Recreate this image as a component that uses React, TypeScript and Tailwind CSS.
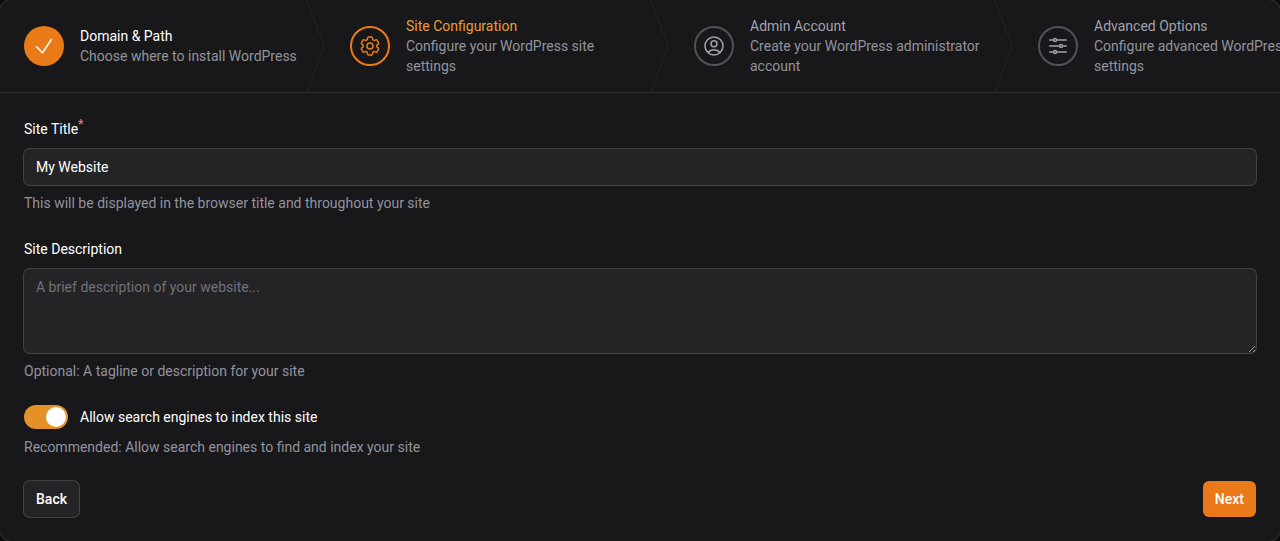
import React, { useState } from 'react';
import clsx from 'clsx';
import {
  HiOutlineAdjustmentsHorizontal,
  HiOutlineCheck,
  HiOutlineCog6Tooth,
  HiOutlineUserCircle,
} from 'react-icons/hi2';
import type { IconType } from 'react-icons';

// ============================================================
// Steps
// ============================================================

type StepStatus = 'done' | 'current' | 'upcoming';

interface Step {
  label: string;
  description: string;
  icon: IconType;
  status: StepStatus;
}

const STEPS: Step[] = [
  {
    label: 'Domain & Path',
    description: 'Choose where to install WordPress',
    icon: HiOutlineCheck,
    status: 'done',
  },
  {
    label: 'Site Configuration',
    description: 'Configure your WordPress site settings',
    icon: HiOutlineCog6Tooth,
    status: 'current',
  },
  {
    label: 'Admin Account',
    description: 'Create your WordPress administrator account',
    icon: HiOutlineUserCircle,
    status: 'upcoming',
  },
  {
    label: 'Advanced Options',
    description: 'Configure advanced WordPress settings',
    icon: HiOutlineAdjustmentsHorizontal,
    status: 'upcoming',
  },
];

const circleStyles: Record<StepStatus, string> = {
  done: 'bg-[#ea7a17] text-white',
  current: 'border-2 border-[#ea7a17] text-[#ea7a17]',
  upcoming: 'border-2 border-[#52525b] text-[#a1a1aa]',
};

const labelStyles: Record<StepStatus, string> = {
  done: 'text-white',
  current: 'text-[#e99c36]',
  upcoming: 'text-[#a1a1aa]',
};

const StepItem: React.FC<{ step: Step; isLast: boolean }> = ({ step, isLast }) => {
  const Icon = step.icon;

  return (
    <li className="relative flex" aria-current={step.status === 'current' ? 'step' : undefined}>
      <button type="button" className="flex h-full items-center gap-4 px-6 py-4 text-left">
        <span
          className={clsx(
            'flex size-10 shrink-0 items-center justify-center rounded-full',
            circleStyles[step.status]
          )}
        >
          <Icon className="size-6" />
        </span>
        <span className="block max-w-[236px]">
          <span className={clsx('block', labelStyles[step.status])}>{step.label}</span>
          <span className="block text-[#93939c]">{step.description}</span>
        </span>
      </button>

      {/* Chevron separator */}
      {!isLast && (
        <svg
          className="absolute inset-y-0 right-0 h-full w-5 text-white/5"
          fill="none"
          preserveAspectRatio="none"
          viewBox="0 0 22 80"
          aria-hidden="true"
        >
          <path
            d="M0 -2L20 40L0 82"
            stroke="currentColor"
            strokeLinejoin="round"
            vectorEffect="non-scaling-stroke"
          />
        </svg>
      )}
    </li>
  );
};

// ============================================================
// Form fields
// ============================================================

interface FieldProps {
  id: string;
  label: string;
  hint: string;
  required?: boolean;
  children: React.ReactNode;
}

const Field: React.FC<FieldProps> = ({ id, label, hint, required, children }) => (
  <div className="flex flex-col gap-2">
    <label htmlFor={id} className="leading-6 text-white">
      {label}
      {required && <sup className="text-xs font-medium text-[#f87171]">*</sup>}
    </label>
    {children}
    <p className="text-[#93939c]">{hint}</p>
  </div>
);

const controlStyles =
  'block w-full rounded-md bg-[#242426] px-3 text-white ring-1 ring-[#434345] outline-none placeholder:text-[#71717a]';

// ============================================================
// Page
// ============================================================

export default function App() {
  const [title, setTitle] = useState('My Website');
  const [description, setDescription] = useState('');
  const [indexed, setIndexed] = useState(true);

  return (
    <div className="bg-[#0c0c0e] font-[Roboto,'Open_Sans',sans-serif] text-sm">
      <div className="overflow-hidden rounded-xl bg-[#18181b] ring-1 ring-[#2f2f32]">
        <ol className="grid grid-cols-[326px_repeat(3,344px)] border-b border-[#2f2f32]">
          {STEPS.map((step, index) => (
            <StepItem key={step.label} step={step} isLast={index === STEPS.length - 1} />
          ))}
        </ol>

        <form className="flex flex-col gap-6 p-6" onSubmit={(e) => e.preventDefault()}>
          <Field
            id="site-title"
            label="Site Title"
            hint="This will be displayed in the browser title and throughout your site"
            required
          >
            <input
              id="site-title"
              type="text"
              required
              value={title}
              onChange={(e) => setTitle(e.target.value)}
              className={clsx(controlStyles, 'h-9')}
            />
          </Field>

          <Field
            id="site-description"
            label="Site Description"
            hint="Optional: A tagline or description for your site"
          >
            <textarea
              id="site-description"
              placeholder="A brief description of your website..."
              value={description}
              onChange={(e) => setDescription(e.target.value)}
              className={clsx(controlStyles, 'h-21 resize-y py-2')}
            />
          </Field>

          <div className="flex flex-col gap-2">
            <label className="flex items-center gap-3 leading-6 text-white">
              <input
                type="checkbox"
                role="switch"
                checked={indexed}
                onChange={(e) => setIndexed(e.target.checked)}
                className="peer sr-only"
              />
              <span className="flex h-6 w-11 items-center rounded-full bg-[#3f3f46] p-[2px] peer-checked:justify-end peer-checked:bg-[#e49128]">
                <span className="size-5 rounded-full bg-white" />
              </span>
              Allow search engines to index this site
            </label>
            <p className="text-[#93939c]">
              Recommended: Allow search engines to find and index your site
            </p>
          </div>

          <div className="flex items-center justify-between font-medium text-white">
            <button type="button" className="h-9 rounded-md bg-[#242426] px-3 ring-1 ring-[#434345]">
              Back
            </button>
            <button type="submit" className="h-9 rounded-md bg-[#ea7a17] px-3">
              Next
            </button>
          </div>
        </form>
      </div>
    </div>
  );
}
